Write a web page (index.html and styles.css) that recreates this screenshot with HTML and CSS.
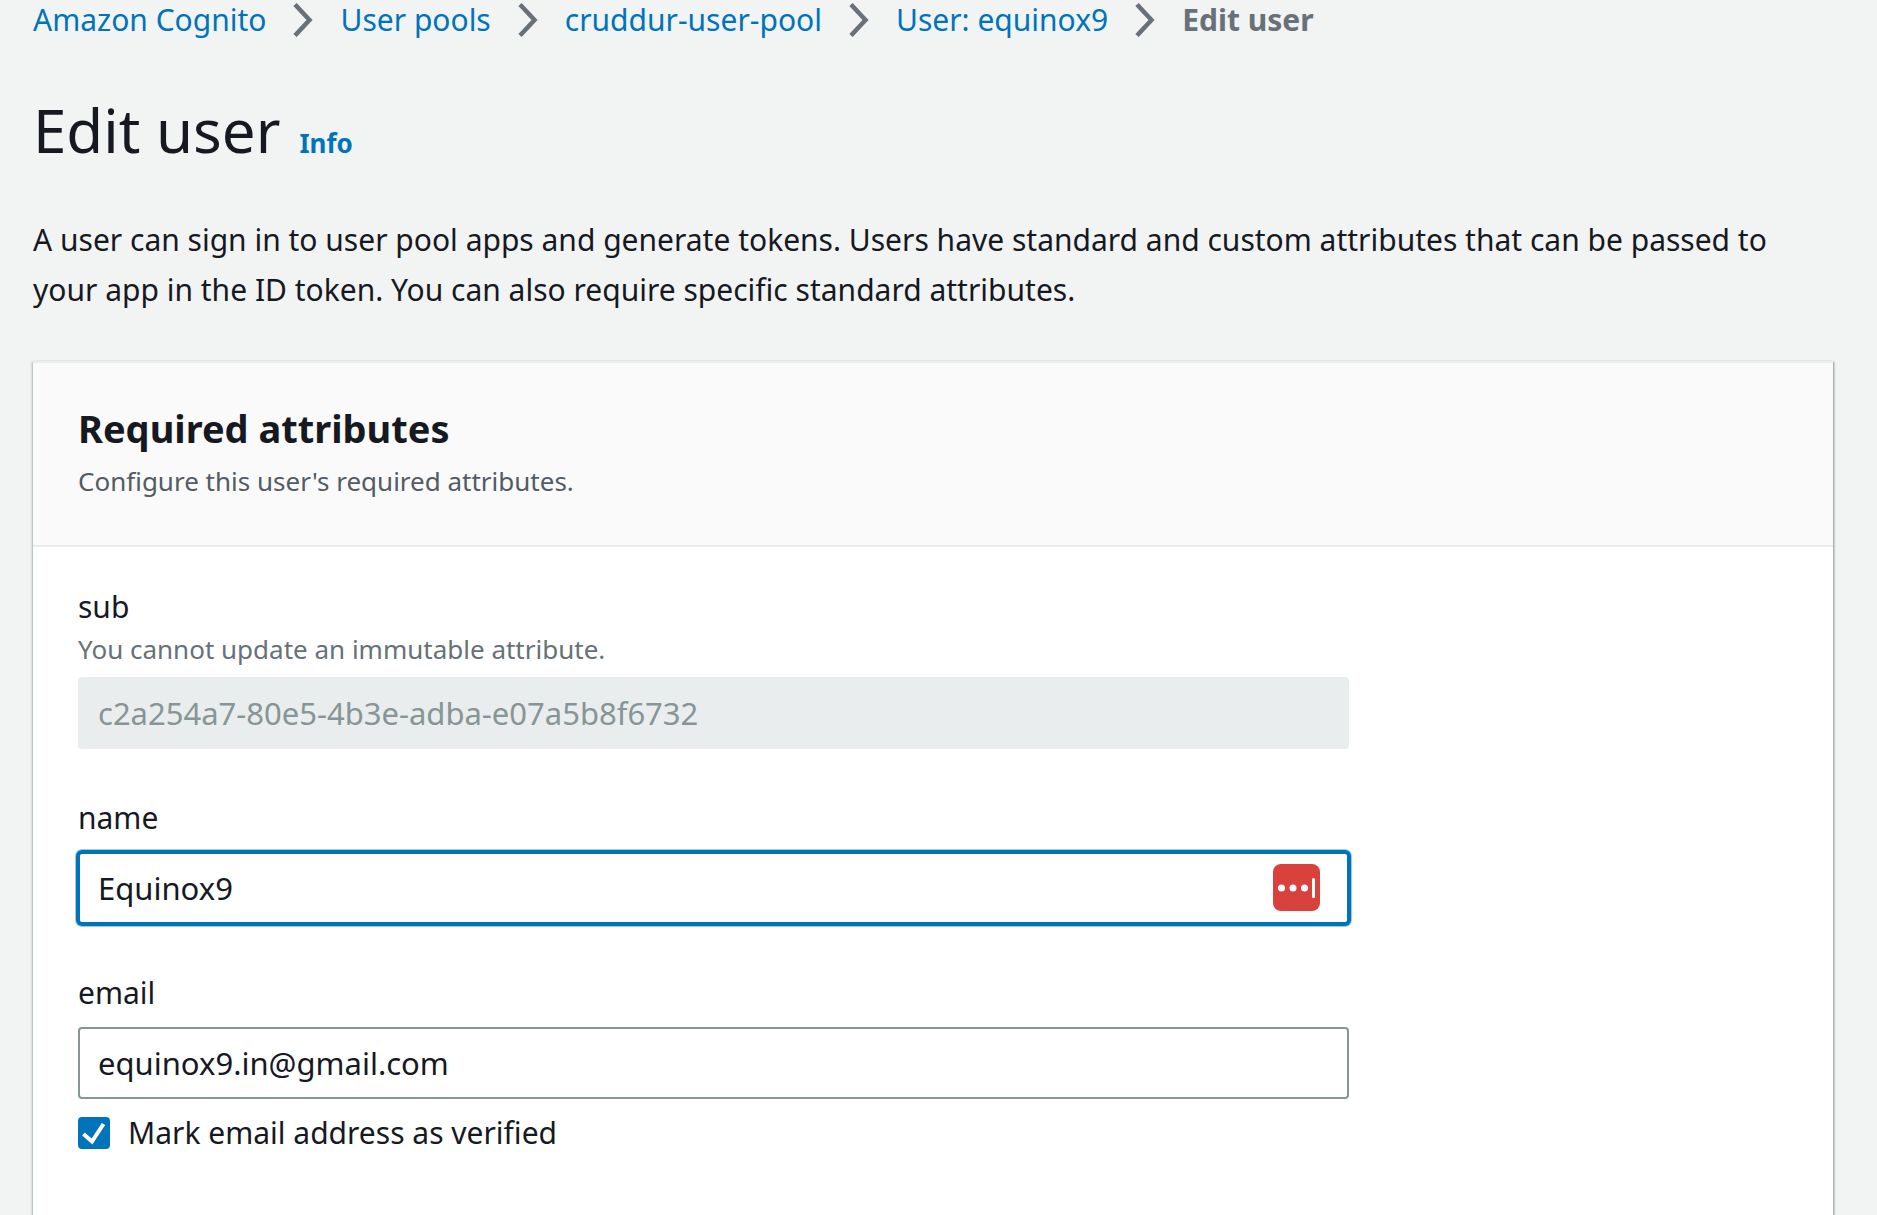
FILE: index.html
```html
<!DOCTYPE html>
<html lang="en">
<head>
<meta charset="utf-8">
<meta name="viewport" content="width=device-width, initial-scale=1">
<title>Edit user</title>
<link rel="stylesheet" href="styles.css">
</head>
<body>
<svg class="sprite" aria-hidden="true">
  <symbol id="chevron" viewBox="0 0 20 34"><path d="M2 1.500 16.500 17 2 32.500" fill="none" stroke="#687078" stroke-width="4.500"/></symbol>
</svg>
<nav aria-label="Breadcrumbs">
  <ol class="breadcrumbs">
    <li><a href="#">Amazon Cognito</a><svg class="chevron"><use href="#chevron"/></svg></li>
    <li><a href="#">User pools</a><svg class="chevron"><use href="#chevron"/></svg></li>
    <li><a href="#">cruddur-user-pool</a><svg class="chevron"><use href="#chevron"/></svg></li>
    <li><a href="#">User: equinox9</a><svg class="chevron"><use href="#chevron"/></svg></li>
    <li><span class="current" aria-current="page">Edit user</span></li>
  </ol>
</nav>
<main>
  <header class="page-header">
    <div class="title-row">
      <h1>Edit user</h1>
      <a class="info" href="#">Info</a>
    </div>
    <p class="intro">A user can sign in to user pool apps and generate tokens. Users have standard and custom attributes that can be passed to your app in the ID token. You can also require specific standard attributes.</p>
  </header>
  <section class="panel">
    <header class="panel-header">
      <h2>Required attributes</h2>
      <p class="panel-text">Configure this user's required attributes.</p>
    </header>
    <form class="form">
      <div class="field">
        <label for="sub">sub</label>
        <p class="hint" id="sub-hint">You cannot update an immutable attribute.</p>
        <input class="input" id="sub" type="text" value="c2a254a7-80e5-4b3e-adba-e07a5b8f6732" aria-describedby="sub-hint" disabled>
      </div>
      <div class="field">
        <label for="name">name</label>
        <div class="input-wrap">
          <input class="input active" id="name" type="text" value="Equinox9">
          <button class="fill" type="button" aria-label="Fill in">
            <svg viewBox="0 0 47 47"><rect width="47" height="47" rx="8" fill="#d9413d"/><g fill="#fff"><circle cx="8.500" cy="24" r="3.500"/><circle cx="20" cy="24" r="3.500"/><circle cx="31.500" cy="24" r="3.500"/><rect x="39" y="14" width="3" height="20" rx="1.500"/></g></svg>
          </button>
        </div>
      </div>
      <div class="field">
        <label for="email">email</label>
        <input class="input" id="email" type="email" value="equinox9.in@gmail.com">
        <div class="check-row">
          <span class="check">
            <input id="verified" type="checkbox" checked>
            <svg viewBox="0 0 32 32"><path d="M5.500 17 14 24.500 25.500 7" fill="none" stroke="#fff" stroke-width="4"/></svg>
          </span>
          <label for="verified">Mark email address as verified</label>
        </div>
      </div>
    </form>
  </section>
</main>
</body>
</html>
```
FILE: styles.css
```css
* {
  box-sizing: border-box;
}

body {
  margin: 0;
  padding: 0 44px 0 33px;
  background: #f2f3f3;
  color: #16191f;
  font-family: "Noto Sans", "Open Sans", sans-serif;
  font-size: 30px;
  line-height: 40px;
}

h1, h2, p, ol {
  margin: 0;
  padding: 0;
}

a {
  color: #0073bb;
  text-decoration: none;
}

.sprite {
  display: none;
}

.breadcrumbs {
  display: flex;
  flex-wrap: wrap;
  list-style: none;
}

.breadcrumbs li {
  display: flex;
  align-items: center;
}

.chevron {
  width: 20px;
  height: 34px;
  margin: 0 27px;
}

.current {
  color: #687078;
  font-weight: 700;
}

.page-header {
  padding: 50px 0 46px;
}

.title-row {
  display: flex;
  align-items: baseline;
  gap: 19px;
}

h1 {
  font-size: 60px;
  font-weight: 400;
  line-height: 80px;
}

.info {
  font-size: 26px;
  font-weight: 700;
}

.intro {
  margin-top: 45px;
  line-height: 50px;
}

.panel {
  min-height: 900px;
  border-top: 2px solid #eaeded;
  background: #fff;
  box-shadow: 1px 1px 2px #879596, -1px 1px 2px #aab7b8;
}

.panel-header {
  padding: 40px 45px 44px;
  border-bottom: 2px solid #eaeded;
  background: #fafafa;
}

h2 {
  font-size: 38px;
  font-weight: 700;
  line-height: 50px;
}

.panel-text,
.hint {
  font-size: 26px;
}

.panel-text {
  margin-top: 8px;
  color: #545b64;
}

.form {
  display: flex;
  flex-direction: column;
  gap: 49px;
  max-width: 1361px;
  padding: 40px 45px;
}

.field {
  display: flex;
  flex-direction: column;
}

.hint {
  padding: 2px 0 8px;
  color: #687078;
}

.input {
  width: 100%;
  height: 72px;
  padding: 0 18px;
  border: 2px solid #879596;
  border-radius: 4px;
  background: #fff;
  color: inherit;
  font: inherit;
  font-size: 31px;
}

.input:disabled {
  border-color: #eaeded;
  background: #eaeded;
  color: #879596;
}

.active {
  border-color: #0073bb;
  outline: 0;
  box-shadow: 0 0 0 2px #0073bb, 0 0 0 3px #99cbe4;
}

label + .input,
.input-wrap {
  margin-top: 14px;
}

.input-wrap {
  position: relative;
  display: flex;
}

.fill {
  position: absolute;
  top: 12px;
  right: 29px;
  width: 47px;
  height: 47px;
  padding: 0;
  border: 0;
  background: none;
}

.fill svg,
.check svg {
  display: block;
  width: 100%;
  height: 100%;
}

.check-row {
  display: flex;
  align-items: center;
  gap: 18px;
  margin-top: 14px;
}

.check {
  position: relative;
  width: 32px;
  height: 32px;
}

.check input {
  position: absolute;
  inset: 0;
  width: 32px;
  height: 32px;
  margin: 0;
  border: 2px solid #879596;
  border-radius: 4px;
  appearance: none;
}

.check input:checked {
  border-color: #0073bb;
  background: #0073bb;
}

.check svg {
  position: relative;
  pointer-events: none;
}
```
